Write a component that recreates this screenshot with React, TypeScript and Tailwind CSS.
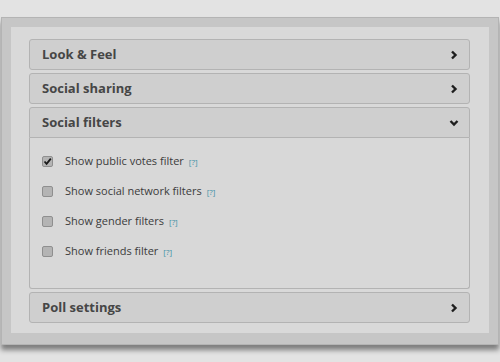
import { useState } from 'react';

const font = { fontFamily: '"Open Sans", "Liberation Sans", sans-serif' };

function Chevron({ open }: { open?: boolean }) {
  return (
    <svg width="10" height="10" viewBox="0 0 10 10" className="text-[#1e1e1e]">
      {open ? (
        <path d="M1.5 3 L5 6.5 L8.5 3" fill="none" stroke="currentColor" strokeWidth="2.4" />
      ) : (
        <path d="M3 1.5 L6.5 5 L3 8.5" fill="none" stroke="currentColor" strokeWidth="2.4" />
      )}
    </svg>
  );
}

function Header({ title, open, onClick }: { title: string; open?: boolean; onClick?: () => void }) {
  return (
    <button
      onClick={onClick}
      className={`flex h-[31px] w-full items-center justify-between border border-[#b3b3b3] bg-[#cfcfcf] pl-[12px] pr-[10px] text-left ${
        open ? 'rounded-t-[3px]' : 'rounded-[3px]'
      }`}
    >
      <span className="text-[13px] font-bold text-[#464646]">{title}</span>
      <Chevron open={open} />
    </button>
  );
}

function Option({ label, checked }: { label: string; checked?: boolean }) {
  const [on, setOn] = useState(!!checked);
  return (
    <label className="flex h-[30px] cursor-pointer items-center" onClick={() => setOn(!on)}>
      <span className="flex h-[11px] w-[11px] items-center justify-center rounded-[2px] border border-[#8f8f8f] bg-[#b4b4b4]">
        {on && (
          <svg width="9" height="9" viewBox="0 0 9 9">
            <path d="M1.5 4.5 L3.6 6.8 L7.8 1.6" fill="none" stroke="#1a1a1a" strokeWidth="1.8" />
          </svg>
        )}
      </span>
      <span className="ml-[12px] text-[11px] text-[#3b3b3b]">{label}</span>
      <a className="ml-[5px] mt-[2px] text-[8px] text-[#3d8fa5]">[?]</a>
    </label>
  );
}

export default function App() {
  const [open, setOpen] = useState('filters');
  const toggle = (k: string) => setOpen(open === k ? '' : k);

  return (
    <div className="h-[362px] w-[500px] overflow-hidden bg-[#e3e3e3] pt-[17px] pl-[1px]" style={font}>
      <div className="h-[328px] w-[498px] border border-[#b4b4b4] bg-[#c6c6c6] pt-[9px] pl-[9px] pr-[9px] shadow-[0_5px_5px_rgba(0,0,0,0.45)]">
        <div className="flex h-[306px] flex-col gap-[3px] bg-[#d9d9d9] pt-[12px] pl-[18px] pr-[19px]">
          <Header title="Look & Feel" open={open === 'look'} onClick={() => toggle('look')} />
          <Header title="Social sharing" open={open === 'sharing'} onClick={() => toggle('sharing')} />
          <div>
            <Header title="Social filters" open={open === 'filters'} onClick={() => toggle('filters')} />
            {open === 'filters' && (
              <div className="h-[151px] rounded-b-[3px] border border-t-0 border-[#b3b3b3] bg-[#d8d8d8] pt-[8px] pl-[12px]">
                <Option label="Show public votes filter" checked />
                <Option label="Show social network filters" />
                <Option label="Show gender filters" />
                <Option label="Show friends filter" />
              </div>
            )}
          </div>
          <Header title="Poll settings" open={open === 'poll'} onClick={() => toggle('poll')} />
        </div>
      </div>
    </div>
  );
}
